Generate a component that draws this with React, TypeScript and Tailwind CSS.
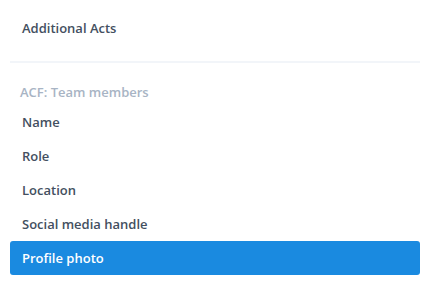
const FIELDS = ["Name", "Role", "Location", "Social media handle", "Profile photo"];

export default function App() {
  const selected = "Profile photo";

  return (
    <div
      className="w-[429px] h-[291px] bg-white pl-[10px] pr-[9px] pt-[12px]"
      style={{ fontFamily: '"Open Sans", "Noto Sans", sans-serif' }}
    >
      {/* Top-level item */}
      <div className="h-[34px] px-[12px] flex items-center text-[13px] font-semibold text-[#434f60]">
        Additional Acts
      </div>

      <div className="mt-[15px] h-[2px] bg-[#f2f5f9]" />

      {/* Group */}
      <div className="h-[42px] px-[10px] flex items-end pb-[3px] text-[13px] font-semibold text-[#a8b4c4]">
        ACF: Team members
      </div>

      <ul>
        {FIELDS.map((f) => (
          <li
            key={f}
            className={`h-[34px] px-[12px] pt-[2px] flex items-center text-[13px] font-semibold rounded-[3px] ${
              f === selected ? "bg-[#1a8ae0] text-white" : "text-[#434f60]"
            }`}
          >
            {f}
          </li>
        ))}
      </ul>
    </div>
  );
}
